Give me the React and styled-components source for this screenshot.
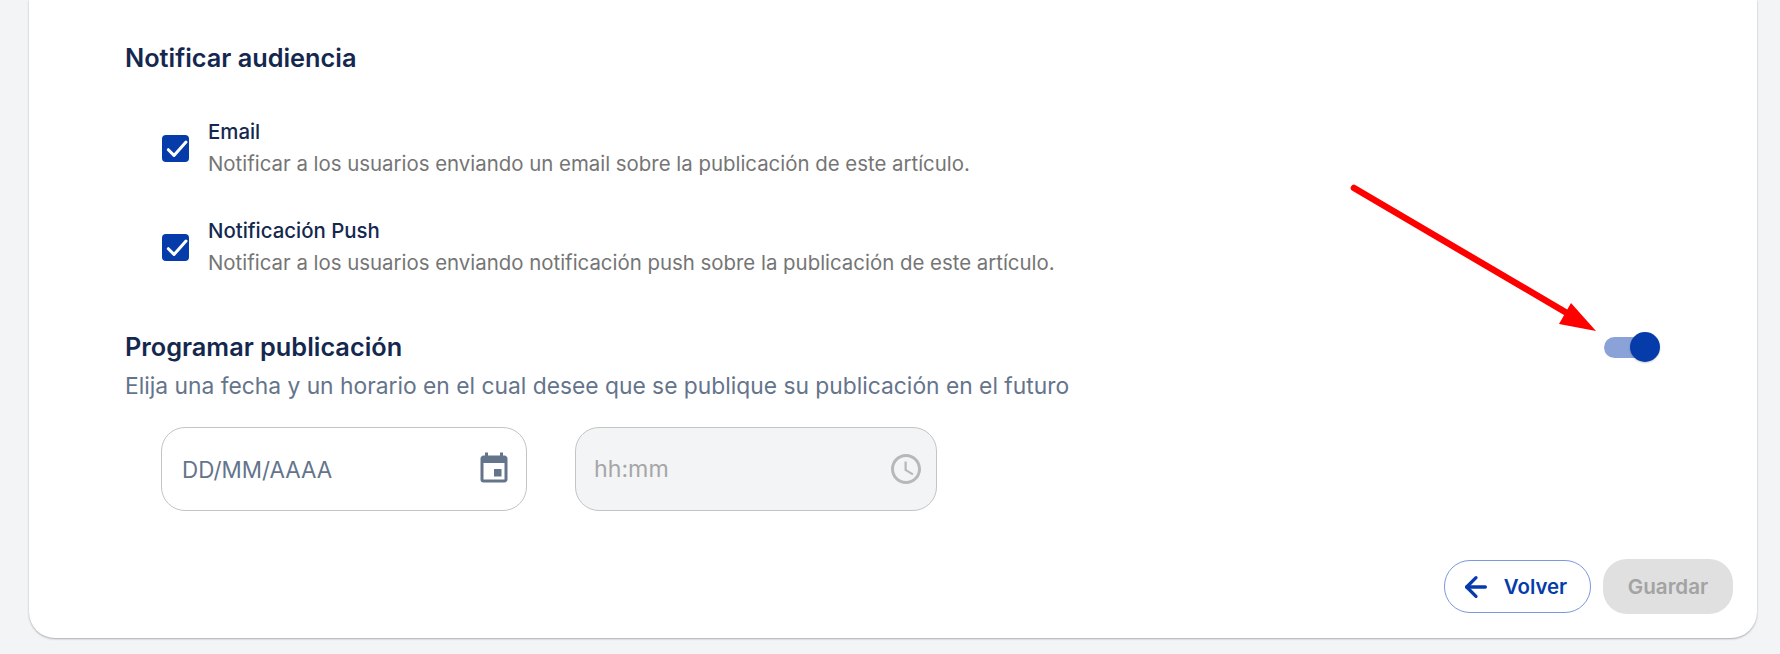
import React from 'react';
import styled, { createGlobalStyle } from 'styled-components';
import { MdEvent, MdAccessTime } from 'react-icons/md';
import { ArrowLeft } from 'lucide-react';

const GlobalStyle = createGlobalStyle`
  html, body { margin: 0; padding: 0; background: #f3f4f6; }
  body { font-family: 'Inter', 'Liberation Sans', sans-serif; }
`;

const Page = styled.div`
  position: relative;
  width: 1780px;
  height: 654px;
  padding: 0 23px 16px 29px;
  box-sizing: border-box;
  overflow: hidden;
`;

const Card = styled.main`
  height: 638px;
  box-sizing: border-box;
  background: #fff;
  border-radius: 0 0 26px 26px;
  box-shadow: 0 1px 2px rgba(60, 60, 70, 0.4);
  padding: 42px 24px 24px 96px;
  display: flex;
  flex-direction: column;
`;

const Title = styled.h2`
  margin: 0;
  font-size: 25.3px;
  line-height: 32px;
  font-weight: 600;
  color: #14284f;
`;

const Options = styled.div`
  display: flex;
  flex-direction: column;
  gap: 43px;
  margin: 46px 0 0 37px;
`;

const Option = styled.label`
  display: flex;
  align-items: center;
  gap: 19px;
`;

const Box = styled.span`
  width: 27px;
  height: 27px;
  border-radius: 4px;
  background: #053caa;
  display: flex;
`;

const OptionText = styled.div`
  display: flex;
  flex-direction: column;
  gap: 8px;
`;

const OptionLabel = styled.span`
  font-size: 20.4px;
  line-height: 24px;
  font-weight: 500;
  color: #14284f;
`;

const OptionHint = styled.span`
  font-size: 20.4px;
  line-height: 24px;
  color: #757575;
`;

const ScheduleHead = styled.div`
  display: flex;
  justify-content: space-between;
  align-items: center;
  margin: 56px 73px 0 0;
`;

const Subtitle = styled.p`
  margin: 9px 0 0;
  font-size: 22.8px;
  line-height: 28px;
  color: #64748b;
`;

const Fields = styled.div`
  display: flex;
  gap: 48px;
  margin: 27px 0 0 36px;
`;

const Field = styled.div`
  width: ${p => p.$width}px;
  height: 84px;
  box-sizing: border-box;
  border: 1px solid #c4c4c4;
  border-radius: 24px;
  background: ${p => (p.$disabled ? '#f3f4f6' : '#fff')};
  color: ${p => (p.$disabled ? '#a6a6a6' : '#64748b')};
  padding: ${p => (p.$disabled ? '0 12px 0 18px' : '0 14px 0 20px')};
  display: flex;
  align-items: center;
  justify-content: space-between;
  font-size: ${p => (p.$disabled ? '23.2px' : '22.4px')};
  svg {
    font-size: 36px;
    color: ${p => (p.$disabled ? '#b8b8b8' : '#64748b')};
  }
`;

const Toggle = styled.span`
  width: 56px;
  height: 30px;
  position: relative;
  display: block;
  &::before {
    content: '';
    position: absolute;
    left: 0;
    top: 5px;
    width: 48px;
    height: 21px;
    border-radius: 11px;
    background: #8aa2d8;
  }
  &::after {
    content: '';
    position: absolute;
    right: 0;
    top: 0;
    width: 30px;
    height: 30px;
    border-radius: 50%;
    background: #053caa;
    box-shadow: 0 1px 2px rgba(0, 0, 0, 0.2);
  }
`;

const Footer = styled.div`
  margin-top: auto;
  display: flex;
  justify-content: flex-end;
  align-items: center;
  gap: 12px;
`;

const BackButton = styled.button`
  width: 147px;
  height: 53px;
  box-sizing: border-box;
  border: 1px solid #7c99dc;
  border-radius: 26px;
  background: #fff;
  color: #053caa;
  font: 600 20.4px 'Inter', sans-serif;
  display: flex;
  align-items: center;
  justify-content: center;
  gap: 12px;
  padding: 0 8px 0 0;
`;

const SaveButton = styled.button`
  width: 130px;
  height: 55px;
  border: 0;
  border-radius: 24px;
  background: #e0e0e0;
  color: #a3a3a3;
  font: 600 20.6px 'Inter', sans-serif;
  padding: 0;
`;

const Arrow = styled.svg`
  position: absolute;
  left: 0;
  top: 0;
  pointer-events: none;
`;

const CheckMark = () => (
  <svg width="27" height="27" viewBox="0 0 27 27" fill="none">
    <path d="M6.3 14.7 L12 20.4 L24 7" stroke="#fff" strokeWidth="3" strokeLinecap="round" strokeLinejoin="round" />
  </svg>
);

export default function App() {
  return (
    <Page>
      <GlobalStyle />
      <Card>
        <Title>Notificar audiencia</Title>
        <Options>
          <Option>
            <Box><CheckMark /></Box>
            <OptionText>
              <OptionLabel>Email</OptionLabel>
              <OptionHint>Notificar a los usuarios enviando un email sobre la publicación de este artículo.</OptionHint>
            </OptionText>
          </Option>
          <Option>
            <Box><CheckMark /></Box>
            <OptionText>
              <OptionLabel>Notificación Push</OptionLabel>
              <OptionHint>Notificar a los usuarios enviando notificación push sobre la publicación de este artículo.</OptionHint>
            </OptionText>
          </Option>
        </Options>
        <ScheduleHead>
          <Title>Programar publicación</Title>
          <Toggle />
        </ScheduleHead>
        <Subtitle>Elija una fecha y un horario en el cual desee que se publique su publicación en el futuro</Subtitle>
        <Fields>
          <Field $width={366}>
            DD/MM/AAAA
            <MdEvent />
          </Field>
          <Field $width={362} $disabled>
            hh:mm
            <MdAccessTime />
          </Field>
        </Fields>
        <Footer>
          <BackButton><ArrowLeft size={32} strokeWidth={2.5} />Volver</BackButton>
          <SaveButton disabled>Guardar</SaveButton>
        </Footer>
      </Card>
      <Arrow width="1780" height="654" viewBox="0 0 1780 654">
        <line x1="1354" y1="188" x2="1572" y2="316" stroke="#ff0000" strokeWidth="6.5" strokeLinecap="round" />
        <polygon points="1596,331 1559,324 1571,303" fill="#ff0000" />
      </Arrow>
    </Page>
  );
}
